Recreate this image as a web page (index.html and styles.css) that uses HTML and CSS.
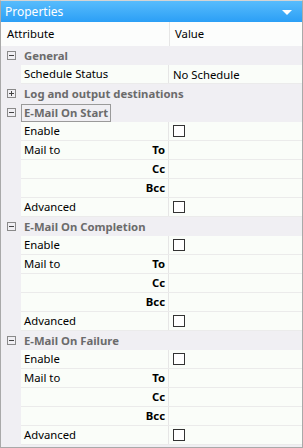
FILE: index.html
```html
<!DOCTYPE html>
<html lang="en">
<head>
    <meta charset="UTF-8">
    <title>Properties</title>
    <link rel="stylesheet" href="styles.css">
</head>
<body>
    <div class="panel">
        <div class="title-bar">
            <span>Properties</span>
            <span class="drop-arrow"></span>
        </div>
        <div class="header">
            <div class="head-attr">Attribute</div>
            <div class="head-value">Value</div>
        </div>

        <div class="group"><span class="expander minus"></span><span class="group-name">General</span></div>
        <div class="prop"><div class="attr">Schedule Status</div><div class="value">No Schedule</div></div>

        <div class="group"><span class="expander plus"></span><span class="group-name">Log and output destinations</span></div>

        <div class="group"><span class="expander minus"></span><span class="group-name focused">E-Mail On Start</span></div>
        <div class="prop"><div class="attr">Enable</div><div class="value"><span class="check"></span></div></div>
        <div class="prop"><div class="attr">Mail to <b>To</b></div><div class="value"></div></div>
        <div class="prop"><div class="attr"><b>Cc</b></div><div class="value"></div></div>
        <div class="prop"><div class="attr"><b>Bcc</b></div><div class="value"></div></div>
        <div class="prop"><div class="attr">Advanced</div><div class="value"><span class="check"></span></div></div>

        <div class="group"><span class="expander minus"></span><span class="group-name">E-Mail On Completion</span></div>
        <div class="prop"><div class="attr">Enable</div><div class="value"><span class="check"></span></div></div>
        <div class="prop"><div class="attr">Mail to <b>To</b></div><div class="value"></div></div>
        <div class="prop"><div class="attr"><b>Cc</b></div><div class="value"></div></div>
        <div class="prop"><div class="attr"><b>Bcc</b></div><div class="value"></div></div>
        <div class="prop"><div class="attr">Advanced</div><div class="value"><span class="check"></span></div></div>

        <div class="group"><span class="expander minus"></span><span class="group-name">E-Mail On Failure</span></div>
        <div class="prop"><div class="attr">Enable</div><div class="value"><span class="check"></span></div></div>
        <div class="prop"><div class="attr">Mail to <b>To</b></div><div class="value"></div></div>
        <div class="prop"><div class="attr"><b>Cc</b></div><div class="value"></div></div>
        <div class="prop"><div class="attr"><b>Bcc</b></div><div class="value"></div></div>
        <div class="prop"><div class="attr">Advanced</div><div class="value"><span class="check"></span></div></div>
    </div>
</body>
</html>
```

FILE: styles.css
```css
body {
    margin: 0;
    padding: 0;
    font-family: "Noto Sans", "Open Sans", sans-serif;
    font-size: 11.3px;
    background-color: #fff;
}

.panel {
    width: 303px;
    height: 448px;
    box-sizing: border-box;
    border: 1px solid #a9a9a9;
    border-top-color: #d4d4d4;
    background-color: #f0eff3;
    overflow: hidden;
}

.title-bar {
    height: 21px;
    display: flex;
    align-items: center;
    justify-content: space-between;
    padding: 0 10px 0 4px;
    font-size: 12px;
    color: #fff;
    background: linear-gradient(#58bcfc, #2b9ff6);
}

.drop-arrow {
    width: 0;
    height: 0;
    border-left: 5px solid transparent;
    border-right: 5px solid transparent;
    border-top: 5px solid #fff;
    margin-top: 2px;
}

.header {
    height: 24px;
    display: flex;
    background-color: #fcfdfc;
    color: #000;
}

.head-attr {
    width: 162px;
    padding-left: 6px;
    border-right: 1px solid #e6e6e6;
    line-height: 24px;
}

.head-value {
    padding-left: 5px;
    line-height: 24px;
}

.group {
    height: 19px;
    display: flex;
    align-items: center;
    color: #6b6b6b;
    font-weight: bold;
}

.expander {
    width: 9px;
    height: 9px;
    box-sizing: border-box;
    border: 1px solid #8a8a8a;
    margin: 0 5px 0 6px;
    position: relative;
}

.expander::before {
    content: "";
    position: absolute;
    left: 1px;
    top: 3px;
    width: 5px;
    height: 1px;
    background-color: #444;
}

.plus::after {
    content: "";
    position: absolute;
    left: 3px;
    top: 1px;
    width: 1px;
    height: 5px;
    background-color: #444;
}

.group-name {
    padding: 0 2px;
    border: 1px solid transparent;
    line-height: 16px;
}

.focused {
    border-color: #9a9a9a;
}

.prop {
    height: 19px;
    margin-left: 20px;
    display: flex;
    background-color: #fafdf9;
    border-bottom: 1px solid #ebebeb;
    box-sizing: border-box;
}

.attr {
    width: 148px;
    box-sizing: border-box;
    padding: 0 3px 0 3px;
    border-right: 1px solid #e6e6e6;
    display: flex;
    justify-content: space-between;
    align-items: center;
    line-height: 18px;
}

.attr b {
    margin-left: auto;
}

.value {
    flex: 1;
    padding-left: 4px;
    display: flex;
    align-items: center;
}

.check {
    width: 12px;
    height: 12px;
    box-sizing: border-box;
    border: 1px solid #333;
    background-color: #fff;
}
```
